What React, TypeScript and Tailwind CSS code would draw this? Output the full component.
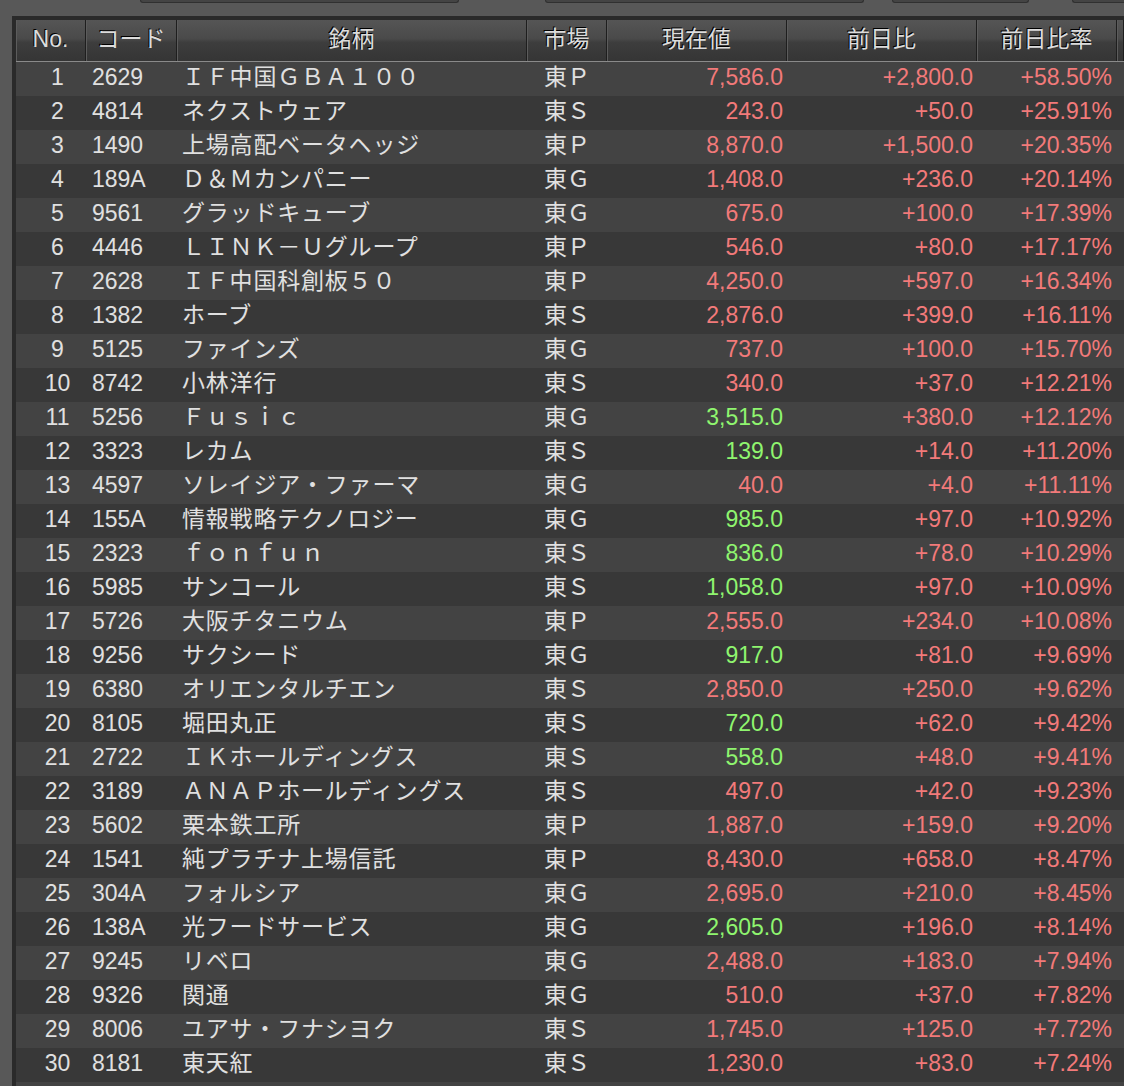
import React from 'react'

type Row = [string, string, string, string, string, string, boolean]

// code, name, market, price, change, rate, price shown in green
const rows: Row[] = [
  ['2629', 'ＩＦ中国ＧＢＡ１００', '東Ｐ', '7,586.0', '+2,800.0', '+58.50%', false],
  ['4814', 'ネクストウェア', '東Ｓ', '243.0', '+50.0', '+25.91%', false],
  ['1490', '上場高配ベータヘッジ', '東Ｐ', '8,870.0', '+1,500.0', '+20.35%', false],
  ['189A', 'Ｄ＆Ｍカンパニー', '東Ｇ', '1,408.0', '+236.0', '+20.14%', false],
  ['9561', 'グラッドキューブ', '東Ｇ', '675.0', '+100.0', '+17.39%', false],
  ['4446', 'ＬＩＮＫ－Ｕグループ', '東Ｐ', '546.0', '+80.0', '+17.17%', false],
  ['2628', 'ＩＦ中国科創板５０', '東Ｐ', '4,250.0', '+597.0', '+16.34%', false],
  ['1382', 'ホーブ', '東Ｓ', '2,876.0', '+399.0', '+16.11%', false],
  ['5125', 'ファインズ', '東Ｇ', '737.0', '+100.0', '+15.70%', false],
  ['8742', '小林洋行', '東Ｓ', '340.0', '+37.0', '+12.21%', false],
  ['5256', 'Ｆｕｓｉｃ', '東Ｇ', '3,515.0', '+380.0', '+12.12%', true],
  ['3323', 'レカム', '東Ｓ', '139.0', '+14.0', '+11.20%', true],
  ['4597', 'ソレイジア・ファーマ', '東Ｇ', '40.0', '+4.0', '+11.11%', false],
  ['155A', '情報戦略テクノロジー', '東Ｇ', '985.0', '+97.0', '+10.92%', true],
  ['2323', 'ｆｏｎｆｕｎ', '東Ｓ', '836.0', '+78.0', '+10.29%', true],
  ['5985', 'サンコール', '東Ｓ', '1,058.0', '+97.0', '+10.09%', true],
  ['5726', '大阪チタニウム', '東Ｐ', '2,555.0', '+234.0', '+10.08%', false],
  ['9256', 'サクシード', '東Ｇ', '917.0', '+81.0', '+9.69%', true],
  ['6380', 'オリエンタルチエン', '東Ｓ', '2,850.0', '+250.0', '+9.62%', false],
  ['8105', '堀田丸正', '東Ｓ', '720.0', '+62.0', '+9.42%', true],
  ['2722', 'ＩＫホールディングス', '東Ｓ', '558.0', '+48.0', '+9.41%', true],
  ['3189', 'ＡＮＡＰホールディングス', '東Ｓ', '497.0', '+42.0', '+9.23%', false],
  ['5602', '栗本鉄工所', '東Ｐ', '1,887.0', '+159.0', '+9.20%', false],
  ['1541', '純プラチナ上場信託', '東Ｐ', '8,430.0', '+658.0', '+8.47%', false],
  ['304A', 'フォルシア', '東Ｇ', '2,695.0', '+210.0', '+8.45%', false],
  ['138A', '光フードサービス', '東Ｇ', '2,605.0', '+196.0', '+8.14%', true],
  ['9245', 'リベロ', '東Ｇ', '2,488.0', '+183.0', '+7.94%', false],
  ['9326', '関通', '東Ｇ', '510.0', '+37.0', '+7.82%', false],
  ['8006', 'ユアサ・フナシヨク', '東Ｓ', '1,745.0', '+125.0', '+7.72%', false],
  ['8181', '東天紅', '東Ｓ', '1,230.0', '+83.0', '+7.24%', false],
]

const cols = 'grid grid-cols-[70px_91px_350px_80px_180px_190px_140px_1fr]'
const headers = ['No.', 'コード', '銘柄', '市場', '現在値', '前日比', '前日比率', '']

export default function App() {
  return (
    <div
      className="h-[1086px] w-[1124px] overflow-hidden bg-[#585858] text-[23px]"
      style={{ fontFamily: '"Liberation Sans", "Noto Sans CJK JP", sans-serif' }}
    >
      {/* bottoms of the toolbar buttons above */}
      <div className="flex h-[16px] items-start pl-[140px]">
        <div className="h-[3px] w-[319px] rounded-b-[4px] border border-t-0 border-[#303030] bg-[#444]" />
        <div className="ml-[86px] h-[3px] w-[319px] rounded-b-[4px] border border-t-0 border-[#303030] bg-[#444]" />
        <div className="ml-[28px] h-[3px] w-[137px] rounded-b-[4px] border border-t-0 border-[#303030] bg-[#444]" />
        <div className="ml-[43px] h-[3px] flex-1 rounded-bl-[4px] border border-t-0 border-r-0 border-[#303030] bg-[#444]" />
      </div>

      <div className="ml-[12px] border-l-4 border-t-4 border-[#2a2a2a]">
        {/* header */}
        <div
          className={`${cols} h-[42px] border-b border-[#8a8a8a] bg-[linear-gradient(to_bottom,#555_0%,#4a4a4a_45%,#3d3d3d_55%,#353535_100%)]`}
        >
          {headers.map((h, i) => (
            <div
              key={i}
              className="flex items-center justify-center border-r border-[#1e1e1e] pb-[3px] leading-none text-[#dcdcdc] shadow-[inset_1px_0_0_#5c5c5c] [text-shadow:-1px_-1px_0_#000]"
            >
              {h}
            </div>
          ))}
        </div>

        {/* body */}
        {[...rows, null].map((r, i) => (
          <div
            key={i}
            className={`${cols} h-[34px] overflow-hidden leading-[31px] text-[#e0e0e0] ${i % 2 === 0 ? 'bg-[#434343]' : 'bg-[#383838]'}`}
          >
            {r && (
              <>
                <div className="pl-[13px] text-center">{i + 1}</div>
                <div className="pl-[6px]">{r[0]}</div>
                <div className="overflow-hidden whitespace-nowrap pl-[5px] tracking-[0.8px]">{r[1]}</div>
                <div className="text-center">{r[2]}</div>
                <div className={`pr-[4px] text-right ${r[6] ? 'text-[#8ff56f]' : 'text-[#f27a7a]'}`}>{r[3]}</div>
                <div className="pr-[4px] text-right text-[#f27a7a]">{r[4]}</div>
                <div className="pr-[5px] text-right text-[#f27a7a]">{r[5]}</div>
                <div />
              </>
            )}
          </div>
        ))}
      </div>
    </div>
  )
}
